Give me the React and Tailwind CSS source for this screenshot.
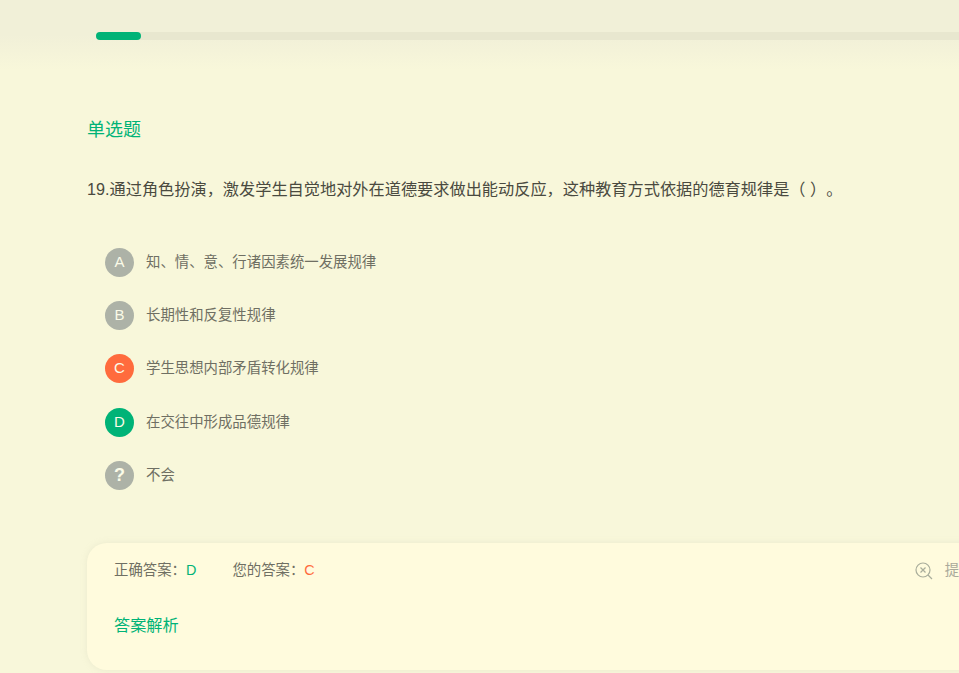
const FONT = { fontFamily: '"Liberation Sans", "Noto Sans CJK SC", sans-serif' };

const options = [
  { k: "A", t: "知、情、意、行诸因素统一发展规律", bg: "bg-[#adb2a7]", mb: "mb-[24px]" },
  { k: "B", t: "长期性和反复性规律", bg: "bg-[#adb2a7]", mb: "mb-[24px]" },
  { k: "C", t: "学生思想内部矛盾转化规律", bg: "bg-[#ff6b3d]", mb: "mb-[25px]" },
  { k: "D", t: "在交往中形成品德规律", bg: "bg-[#00b377]", mb: "mb-[24px]" },
  { k: "?", t: "不会", bg: "bg-[#adb2a7]", mb: "" },
];

export default function App() {
  return (
    <div style={FONT} className="w-[959px] h-[673px] overflow-hidden bg-[#f8f7da] [text-spacing-trim:space-all]">
      <div className="h-[70px] pt-[32px] pl-[96px] bg-gradient-to-b from-[#f1f0d8] from-[50%] to-[#f8f7da]">
        <div className="w-[900px] h-[8px] rounded-[4px] bg-[#e8e7cf]">
          <div className="w-[45px] h-[8px] rounded-[4px] bg-[#00b377]" />
        </div>
      </div>

      <div className="pl-[87px]">
        <div className="mt-[49px] text-[18px] leading-[22px] text-[#00b377]">单选题</div>
        <div className="mt-[36px] text-[16.2px] leading-[24px] text-[#4a4a3f] whitespace-nowrap">
          19.通过角色扮演，激发学生自觉地对外在道德要求做出能动反应，这种教育方式依据的德育规律是（ ）。
        </div>

        <div className="mt-[47px] pl-[18px]">
          {options.map((o) => (
            <div key={o.k} className={`flex items-center h-[29px] ${o.mb}`}>
              <div className={`w-[29px] h-[29px] rounded-full flex items-center justify-center text-[#fbfbe8] text-[15px] ${o.bg} ${o.k === "?" ? "font-bold text-[18px]" : ""}`}>
                {o.k}
              </div>
              <div className="ml-[12px] text-[14.4px] text-[#6f6f63] whitespace-nowrap">{o.t}</div>
            </div>
          ))}
        </div>

        <div className="mt-[53px] w-[960px] h-[127px] rounded-[20px] bg-[#fffbdd] shadow-[0_0_6px_rgba(200,200,170,0.25)] pl-[27px] pt-[18px]">
          <div className="flex items-center h-[20px] text-[14.4px] text-[#6f6f63] whitespace-nowrap">
            <span>正确答案：</span>
            <span className="text-[#00b377]">D</span>
            <span className="ml-[36px]">您的答案：</span>
            <span className="text-[#ff6b3d]">C</span>
            <svg className="ml-[600px] shrink-0" width="18" height="18" viewBox="0 0 18 18" fill="none" stroke="#a9ad9b" strokeWidth="1.2">
              <circle cx="8" cy="8" r="7" />
              <path d="M5.5 5.5l5 5M10.5 5.5l-5 5M13 13l4 4" />
            </svg>
            <span className="ml-[12px] text-[#a9a99a]">提示</span>
          </div>
          <div className="mt-[32px] text-[16.2px] leading-[24px] text-[#00b377]">答案解析</div>
        </div>
      </div>
    </div>
  );
}
